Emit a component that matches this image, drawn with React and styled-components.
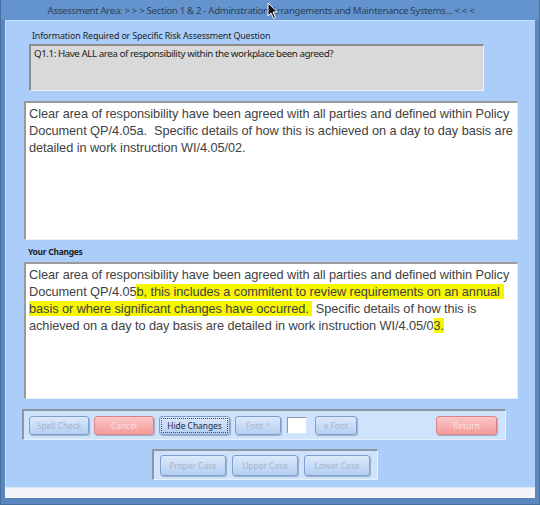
import React from "react";
import styled, { createGlobalStyle } from "styled-components";

const GlobalStyle = createGlobalStyle`
  body {
    margin: 0;
    background: #ffffff;
  }
`;

/* =========================
      WINDOW FRAME
========================= */
const Window = styled.div`
  position: relative;
  width: 540px;
  height: 505px;
  box-sizing: border-box;
  background: #5a87bf;
  border-left: 1px solid #46709f;
  border-right: 1px solid #46709f;
  border-bottom: 1px solid #46709f;
  padding: 0 4px 6px 4px;
  display: flex;
  flex-direction: column;
  font-family: "Noto Sans", "Open Sans", sans-serif;
`;

const TitleBar = styled.div`
  height: 20px;
  display: flex;
  align-items: center;
  justify-content: center;
  background: #6394ce;
  margin: 0 -4px;
  padding-right: 18px;
  color: #2e3f57;
  font-size: 9.6px;
  letter-spacing: -0.3px;
`;

const Panel = styled.div`
  flex: 1;
  background: #aacdfa;
  border-top: 1px solid #c8e0fc;
  border-left: 1px solid #c8e0fc;
  display: flex;
  flex-direction: column;
  padding-left: 18px;
`;

const Footer = styled.div`
  height: 10px;
  background: #f3f5f8;
  border-top: 1px solid #dfe6ef;
`;

/* =========================
      FIELDS
========================= */
const Label = styled.div`
  font-size: ${(p) => (p.bold ? 8.5 : 8.9)}px;
  letter-spacing: ${(p) => (p.bold ? -0.3 : -0.15)}px;
  color: #1d1d1d;
  font-weight: ${(p) => (p.bold ? 700 : 400)};
  margin-left: ${(p) => p.indent || 0}px;
  margin-top: ${(p) => p.top || 0}px;
  height: 12px;
  line-height: 12px;
`;

const QuestionBox = styled.div`
  margin-left: 5px;
  margin-top: 2px;
  width: 455px;
  height: 47px;
  box-sizing: border-box;
  background: #d9d9d9;
  border-top: 2px solid #8d8d8d;
  border-left: 2px solid #8d8d8d;
  border-right: 1px solid #f0f0f0;
  border-bottom: 1px solid #f0f0f0;
  padding: 1px 3px;
  font-size: 9.8px;
  letter-spacing: -0.45px;
  color: #222;
`;

const TextBox = styled.div`
  width: 494px;
  height: ${(p) => p.h}px;
  margin-top: ${(p) => p.top}px;
  box-sizing: border-box;
  background: #ffffff;
  border-top: 2px solid #9a9a9a;
  border-left: 2px solid #9a9a9a;
  border-right: 1px solid #e8eef6;
  border-bottom: 1px solid #e8eef6;
  padding: 2px 3px;
  font-family: "Liberation Sans", Arial, sans-serif;
  font-size: 12.75px;
  letter-spacing: -0.06px;
  line-height: 17px;
  color: #424242;
  white-space: nowrap;
`;

const Line = styled.div`
  height: 17px;
`;

const Mark = styled.span`
  background: #f6f600;
  padding-right: ${(p) => p.pad || 0}px;
`;

/* =========================
      BUTTON BARS
========================= */
const ButtonBar = styled.div`
  display: flex;
  align-items: center;
  gap: ${(p) => p.gap || 5}px;
  width: ${(p) => p.w}px;
  height: ${(p) => p.h}px;
  margin-left: ${(p) => p.left}px;
  margin-top: ${(p) => p.top}px;
  box-sizing: border-box;
  padding-left: ${(p) => p.pad}px;
  background: #cfe3fc;
  border-top: 2px solid #8d96a3;
  border-left: 2px solid #8d96a3;
  border-right: 1px solid #e6f0fd;
  border-bottom: 1px solid #e6f0fd;
`;

const Button = styled.button`
  width: ${(p) => p.w}px;
  height: ${(p) => p.h || 19}px;
  margin-left: ${(p) => p.ml || 0}px;
  padding: 0;
  border-radius: 3px;
  font-family: "Noto Sans", "Open Sans", sans-serif;
  font-size: 8.4px;
  color: ${(p) => (p.active ? "#1f2a3a" : p.red ? "#f6e2e2" : "#a7b5c9")};
  background: ${(p) =>
    p.red
      ? "linear-gradient(#fcc7c7, #f49a9a)"
      : "linear-gradient(#dce9fb, #b4cff3)"};
  border: 1px solid ${(p) => (p.red ? "#d98484" : "#7f9fcb")};
  outline: ${(p) => (p.active ? "1px dotted #3a4a66" : "none")};
  outline-offset: -3px;
  box-shadow: 1px 1px 1px rgba(60, 80, 110, 0.35);
`;

const ColourSwatch = styled.div`
  width: 19px;
  height: 16px;
  box-sizing: border-box;
  background: #ffffff;
  border-top: 1px solid #8d96a3;
  border-left: 1px solid #8d96a3;
  margin-left: 1px;
`;

const Cursor = styled.svg`
  position: absolute;
  left: 266px;
  top: 2px;
`;

export default function App() {
  return (
    <>
      <GlobalStyle />
      <Window>
        <TitleBar>
          Assessment Area: &gt; &gt; &gt; Section 1 &amp; 2 - Adminstration Arrangements and Maintenance Systems... &lt; &lt; &lt;
        </TitleBar>
        <Panel>
          <Label indent={8} top={9}>
            Information Required or Specific Risk Assessment Question
          </Label>
          <QuestionBox>Q1.1: Have ALL area of responsibility within the workplace been agreed?</QuestionBox>
          <TextBox h={139} top={10}>
            <Line>Clear area of responsibility have been agreed with all parties and defined within Policy</Line>
            <Line>Document QP/4.05a.&nbsp; Specific details of how this is achieved on a day to day basis are</Line>
            <Line>detailed in work instruction WI/4.05/02.</Line>
          </TextBox>
          <Label bold indent={4} top={6}>
            Your Changes
          </Label>
          <TextBox h={137} top={4}>
            <Line>Clear area of responsibility have been agreed with all parties and defined within Policy</Line>
            <Line>
              Document QP/4.05<Mark pad={4}>b, this includes a commitent to review requirements on an annual</Mark>
            </Line>
            <Line>
              <Mark>basis or where significant changes have occurred.&nbsp;</Mark>&nbsp;Specific details of how this is
            </Line>
            <Line>
              achieved on a day to day basis are detailed in work instruction WI/4.05/0<Mark>3.</Mark>
            </Line>
          </TextBox>
          <ButtonBar w={484} h={31} left={-2} top={10} pad={5}>
            <Button w={60}>Spell Check</Button>
            <Button w={60} red>Cancel</Button>
            <Button w={71} active>Hide Changes</Button>
            <Button w={46}>Font ^</Button>
            <ColourSwatch />
            <Button w={42} ml={4}>v Font</Button>
            <Button w={61} red ml={74}>Return</Button>
          </ButtonBar>
          <ButtonBar w={226} h={31} left={128} top={9} pad={6} gap={6}>
            <Button w={66} h={21}>Proper Case</Button>
            <Button w={66} h={21}>Upper Case</Button>
            <Button w={66} h={21}>Lower Case</Button>
          </ButtonBar>
        </Panel>
        <Footer />
        <Cursor width="12" height="18" viewBox="0 0 12 18">
          <path d="M1 1 L1 14 L4 11 L6.5 16.5 L8.5 15.5 L6 10 L10.5 10 Z" fill="#111" stroke="#fff" strokeWidth="1" />
        </Cursor>
      </Window>
    </>
  );
}
